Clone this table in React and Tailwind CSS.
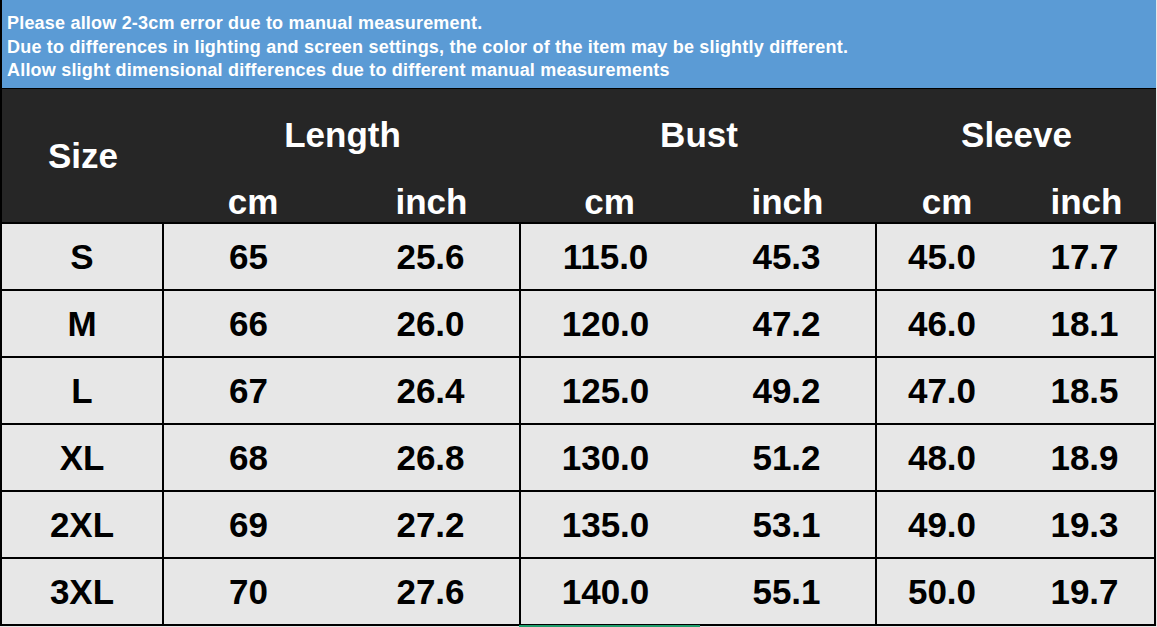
const notes = [
  'Please allow 2-3cm error due to manual measurement.',
  'Due to differences in lighting and screen settings, the color of the item may be slightly different.',
  'Allow slight dimensional differences due to different manual measurements',
]

const rows = [
  ['S', '65', '25.6', '115.0', '45.3', '45.0', '17.7'],
  ['M', '66', '26.0', '120.0', '47.2', '46.0', '18.1'],
  ['L', '67', '26.4', '125.0', '49.2', '47.0', '18.5'],
  ['XL', '68', '26.8', '130.0', '51.2', '48.0', '18.9'],
  ['2XL', '69', '27.2', '135.0', '53.1', '49.0', '19.3'],
  ['3XL', '70', '27.6', '140.0', '55.1', '50.0', '19.7'],
]

function Group({ title, width, split }) {
  return (
    <div className="flex flex-col" style={{ width }}>
      <div className="h-[92px] flex items-center justify-center">{title}</div>
      <div className="h-[42px] flex">
        <div className="flex items-center justify-center" style={{ width: split }}>cm</div>
        <div className="flex-1 flex items-center justify-center">inch</div>
      </div>
    </div>
  )
}

export default function App() {
  return (
    <div
      className="w-[1157px] h-[627px] overflow-hidden bg-[#e7e7e7] relative"
      style={{ fontFamily: '"Liberation Sans", Arial, sans-serif' }}
    >
      <div className="border-l-2 border-black w-[1156px]">
        {/* Notes */}
        <div className="h-[88px] bg-[#5b9bd5] pl-[5px] pt-[12px] text-[18px] tracking-[0.2px] leading-[23.5px] font-bold text-white">
          {notes.map(n => (
            <div key={n} className="whitespace-nowrap">{n}</div>
          ))}
        </div>
        <div className="h-[1px] bg-black" />

        {/* Header */}
        <div className="h-[133px] bg-[#262626] flex text-white text-[35px] font-bold leading-none">
          <div className="w-[162px] flex items-center justify-center">Size</div>
          <Group title="Length" width={357} split={178} />
          <Group title="Bust" width={356} split={177} />
          <Group title="Sleeve" width={279} split={140} />
        </div>

        {/* Body */}
        <div className="border-r-2 border-black w-[1154px] text-black text-[35px] font-bold leading-none">
          {rows.map(r => (
            <div key={r[0]} className="flex border-t-2 border-black h-[67px]">
              <div className="w-[160px] flex items-center justify-center">{r[0]}</div>
              <div className="w-[357px] flex border-l-2 border-black">
                <div className="w-[178px] pr-[9px] flex items-center justify-center">{r[1]}</div>
                <div className="flex-1 flex items-center justify-center">{r[2]}</div>
              </div>
              <div className="w-[356px] flex border-l-2 border-black">
                <div className="w-[177px] pr-[8px] flex items-center justify-center">{r[3]}</div>
                <div className="flex-1 flex items-center justify-center">{r[4]}</div>
              </div>
              <div className="flex-1 flex border-l-2 border-black">
                <div className="w-[138px] pr-[8px] flex items-center justify-center">{r[5]}</div>
                <div className="flex-1 flex items-center justify-center">{r[6]}</div>
              </div>
            </div>
          ))}
          <div className="h-[2px] bg-black" />
        </div>
      </div>

      {/* selection marker */}
      <div className="absolute left-[519px] top-[625px] w-[181px] h-[3px] bg-[#1f9d6c]" />
    </div>
  )
}
